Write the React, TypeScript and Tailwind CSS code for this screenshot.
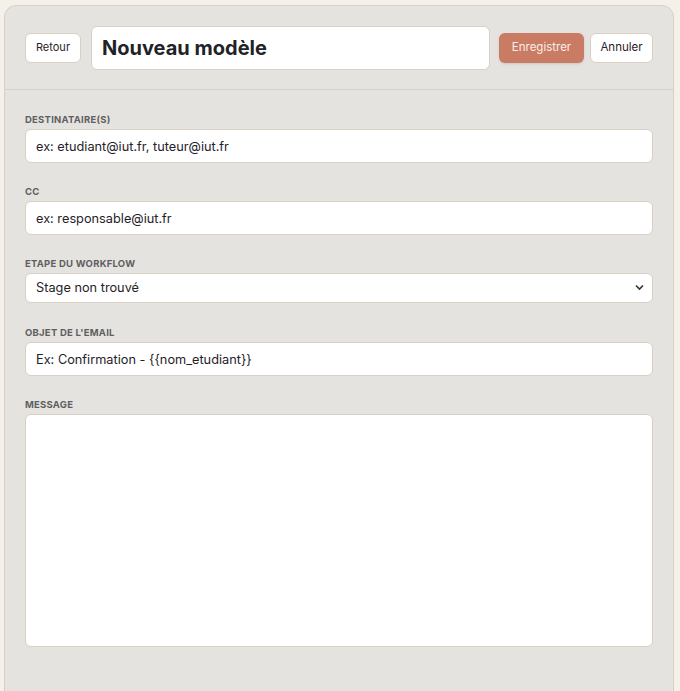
const fields = [
  { label: 'DESTINATAIRE(S)', placeholder: 'ex: etudiant@iut.fr, tuteur@iut.fr' },
  { label: 'CC', placeholder: 'ex: responsable@iut.fr' },
];

const inputClass =
  'w-full h-[34px] rounded-md border border-[#d9cfc5] bg-white px-[10px] text-[12.75px] text-[#1f2328] placeholder:text-[#1f2328] outline-none';

const Label = ({ children }: { children: React.ReactNode }) => (
  <div className="mb-[3px] text-[9.5px] leading-[12px] font-bold tracking-wide text-[#5f5f5f]">
    {children}
  </div>
);

export default function App() {
  return (
    <div className="min-h-screen bg-[#f5f1ea] pl-[4px] pr-[6px] pt-[5px] font-['Inter',sans-serif]">
      <div className="h-[700px] rounded-t-xl border border-[#d9cfc5] bg-[#e5e3e0]">
        <div className="flex items-center border-b border-[#d9cfc5] px-5 h-[84px]">
          <button className="h-[30px] w-[56px] rounded-md border border-[#d9cfc5] bg-white text-[11px] text-[#1f2328]">
            Retour
          </button>
          <input
            className="ml-[10px] h-[44px] w-[399px] rounded-md border border-[#d9cfc5] bg-white px-[10px] text-[20px] font-bold text-[#1f2328] outline-none"
            defaultValue="Nouveau modèle"
          />
          <button className="ml-[9px] h-[30px] w-[85px] rounded-md bg-[#c97b63] text-[11.5px] text-[#fbeee9] shadow-sm">
            Enregistrer
          </button>
          <button className="ml-[6px] h-[30px] w-[63px] rounded-md border border-[#d9cfc5] bg-white text-[11.5px] text-[#1f2328]">
            Annuler
          </button>
        </div>

        <div className="flex flex-col gap-[23px] px-5 pt-[24px]">
          {fields.map((f) => (
            <div key={f.label}>
              <Label>{f.label}</Label>
              <input className={inputClass} placeholder={f.placeholder} />
            </div>
          ))}
          <div>
            <Label>ETAPE DU WORKFLOW</Label>
            <div className="relative">
              <select className="h-[30px] w-full appearance-none rounded-md border border-[#d9cfc5] bg-white px-[10px] text-[12.75px] text-[#1f2328] outline-none">
                <option>Stage non trouvé</option>
              </select>
              <svg
                className="pointer-events-none absolute right-[9px] top-[11px]"
                width="9"
                height="7"
                viewBox="0 0 9 7"
                fill="none"
                stroke="#333"
                strokeWidth="1.6"
              >
                <path d="M1 1.5l3.5 3.5 3.5-3.5" />
              </svg>
            </div>
          </div>
          <div className="mt-[1px]">
            <Label>OBJET DE L'EMAIL</Label>
            <input className={inputClass} placeholder="Ex: Confirmation - {{nom_etudiant}}" />
          </div>
          <div>
            <Label>MESSAGE</Label>
            <textarea className="block h-[233px] w-full resize-none rounded-md border border-[#d9cfc5] bg-white px-[10px] py-2 text-[12.75px] outline-none" />
          </div>
        </div>
      </div>
    </div>
  );
}
